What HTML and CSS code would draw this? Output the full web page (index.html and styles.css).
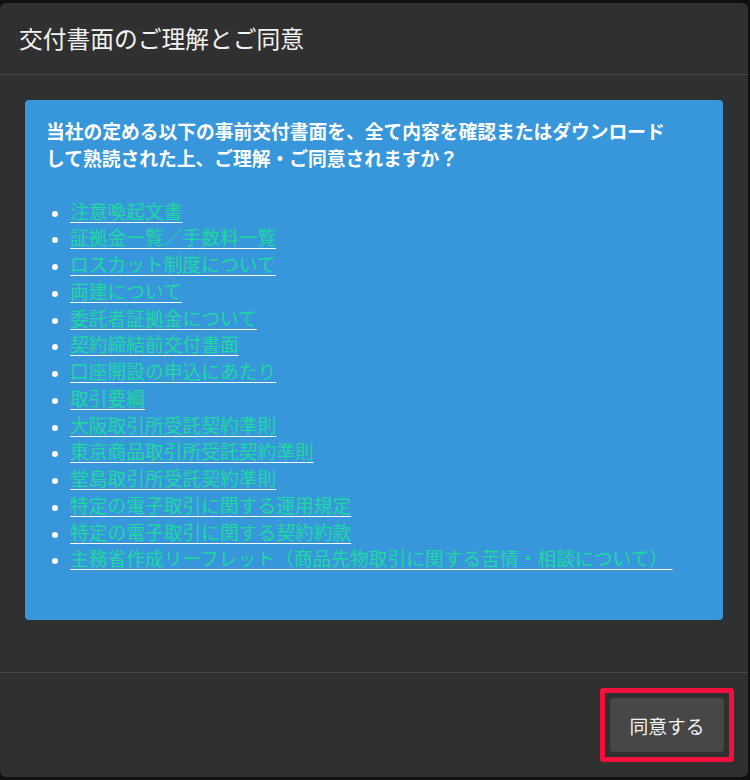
FILE: index.html
```html
<!DOCTYPE html>
<html lang="ja">

<head>
    <meta charset="UTF-8">
    <meta name="viewport" content="width=device-width, initial-scale=1.0">
    <title>交付書面のご理解とご同意</title>
    <link rel="stylesheet" href="styles.css">
</head>

<body>
    <div class="modal">
        <div class="modal-header">
            <h4 class="modal-title">交付書面のご理解とご同意</h4>
        </div>
        <div class="modal-body">
            <div class="notice">
                <p class="notice-lead">当社の定める以下の事前交付書面を、全て内容を確認またはダウンロード<br>して熟読された上、ご理解・ご同意されますか？</p>
                <ul class="doc-list">
                    <li><a href="#">注意喚起文書</a></li>
                    <li><a href="#">証拠金一覧／手数料一覧</a></li>
                    <li><a href="#">ロスカット制度について</a></li>
                    <li><a href="#">両建について</a></li>
                    <li><a href="#">委託者証拠金について</a></li>
                    <li><a href="#">契約締結前交付書面</a></li>
                    <li><a href="#">口座開設の申込にあたり</a></li>
                    <li><a href="#">取引要綱</a></li>
                    <li><a href="#">大阪取引所受託契約準則</a></li>
                    <li><a href="#">東京商品取引所受託契約準則</a></li>
                    <li><a href="#">堂島取引所受託契約準則</a></li>
                    <li><a href="#">特定の電子取引に関する運用規定</a></li>
                    <li><a href="#">特定の電子取引に関する契約約款</a></li>
                    <li><a href="#">主務省作成リーフレット（商品先物取引に関する苦情・相談について）&nbsp;</a></li>
                </ul>
            </div>
        </div>
        <div class="modal-footer">
            <span class="highlight">
                <button class="btn-agree" type="button">同意する</button>
            </span>
        </div>
    </div>
</body>

</html>
```

FILE: styles.css
```css
body {
    margin: 0;
    background-color: #101010;
    font-family: Meiryo, "Noto Sans CJK JP", "Noto Sans", sans-serif;
    color: #f2f2f2;
}

.modal {
    width: 748px;
    height: 774px;
    margin-top: 3px;
    background-color: #303030;
    border-radius: 6px;
    display: flex;
    flex-direction: column;
}

.modal-header {
    height: 71px;
    padding-left: 19px;
    border-bottom: 1px solid #474747;
    display: flex;
    align-items: center;
    flex-shrink: 0;
}

.modal-title {
    margin: 0;
    font-size: 23.75px;
    font-weight: normal;
    line-height: 1.2;
}

.modal-body {
    padding: 25px 25px 52px;
    flex-shrink: 0;
}

.notice {
    background-color: #3897db;
    border-radius: 4px;
    height: 520px;
    box-sizing: border-box;
    padding: 18px 21px;
    font-size: 18.75px;
    line-height: 26.75px;
}

.notice-lead {
    margin: 0 0 26px;
    font-weight: bold;
    color: #fff;
}

.doc-list {
    margin: 0;
    padding-left: 24px;
}

.doc-list li::marker {
    color: #fff;
    font-size: 15px;
}

.doc-list a {
    color: #1fd8a2;
    text-decoration: underline;
    text-decoration-color: #fff;
    text-underline-offset: 3px;
}

.modal-footer {
    flex: 1;
    border-top: 1px solid #474747;
    display: flex;
    justify-content: flex-end;
    align-items: center;
    padding-right: 14px;
}

.highlight {
    display: inline-block;
    border: 5px solid #f2113d;
    border-radius: 3px;
    padding: 5px;
}

.btn-agree {
    display: block;
    width: 114px;
    height: 54px;
    border: none;
    border-radius: 4px;
    background-color: #474747;
    color: #f2f2f2;
    font-family: inherit;
    font-size: 18.75px;
    cursor: pointer;
}
```
